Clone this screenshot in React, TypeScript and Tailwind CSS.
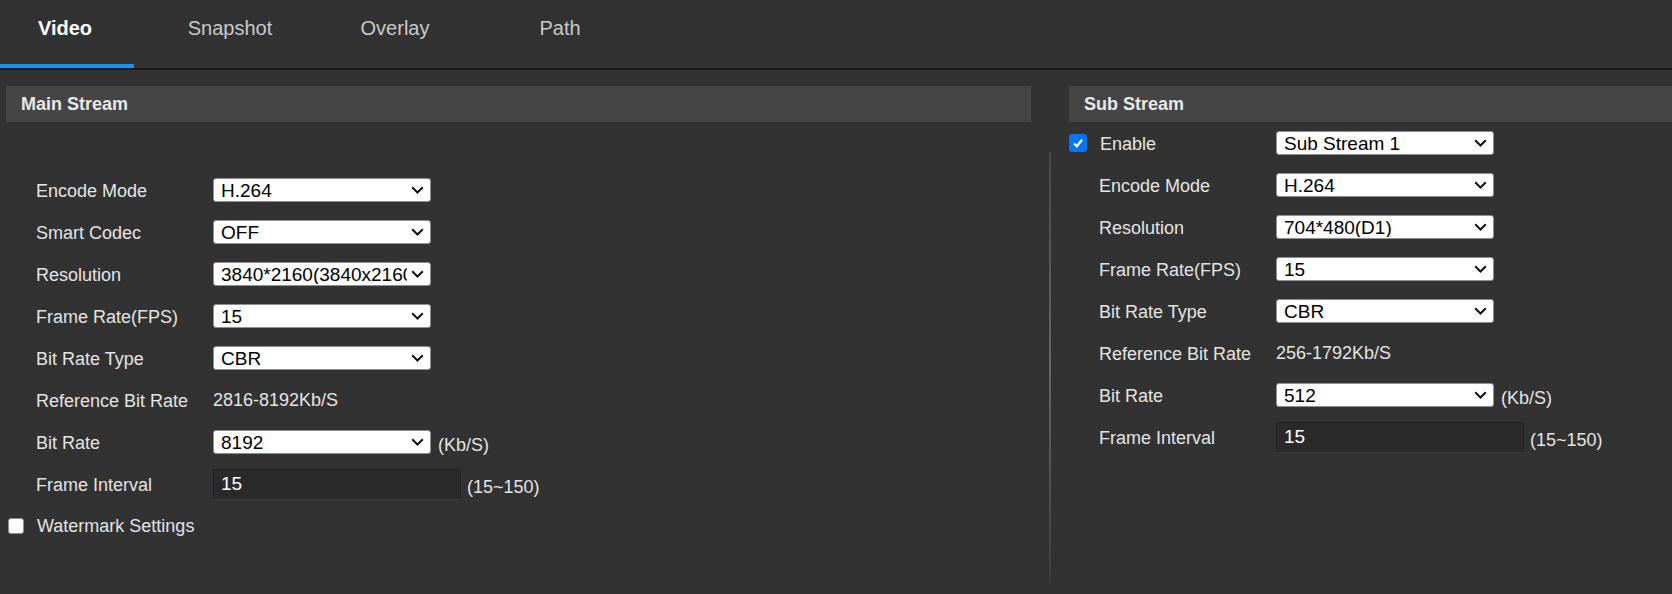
import { useState } from "react";

const FONT = { fontFamily: '"Liberation Sans", Arial, sans-serif' };

function Chevron() {
  return (
    <svg width="13" height="8" viewBox="0 0 13 8" className="shrink-0">
      <path d="M1.2 1.2 L6.5 6.5 L11.8 1.2" fill="none" stroke="#111" strokeWidth="2" />
    </svg>
  );
}

function Select({ value }: { value: string }) {
  return (
    <div className="w-[218px] h-[24px] rounded-[3px] bg-white border border-[#8f8f8f] flex items-center pl-[7px] pr-[6px] gap-1">
      <span className="flex-1 overflow-hidden whitespace-nowrap text-[19px] leading-none text-black">{value}</span>
      <Chevron />
    </div>
  );
}

function Row({ label, children }: { label: string; children: React.ReactNode }) {
  return (
    <div className="h-[42px] flex items-center">
      <div className="w-[207px] pl-[30px] pt-[2px] shrink-0 text-[18px] text-[#e4e4e4] whitespace-nowrap">{label}</div>
      {children}
    </div>
  );
}

function SelectRow({ label, value, unit }: { label: string; value: string; unit?: string }) {
  return (
    <Row label={label}>
      <Select value={value} />
      {unit && <span className="ml-[7px] mt-[6px] text-[18px] text-[#e4e4e4]">{unit}</span>}
    </Row>
  );
}

function IntervalRow() {
  const [v, setV] = useState("15");
  return (
    <Row label="Frame Interval">
      <input
        value={v}
        onChange={(e) => setV(e.target.value)}
        className="w-[248px] h-[31px] bg-[#2a2a2a] border border-[#232323] border-b-[#3a3a3a] px-[7px] text-[19px] text-white outline-none"
      />
      <span className="ml-[6px] mt-[6px] text-[18px] text-[#e4e4e4]">(15~150)</span>
    </Row>
  );
}

function Header({ title }: { title: string }) {
  return (
    <div className="h-[36px] bg-[#454545] flex items-center pl-[15px] text-[18px] font-bold text-[#e8e8e8]">
      {title}
    </div>
  );
}

const TABS = ["Video", "Snapshot", "Overlay", "Path"];

export default function App() {
  const [tab, setTab] = useState(0);
  const [enabled, setEnabled] = useState(true);
  const [watermark, setWatermark] = useState(false);

  return (
    <div style={FONT} className="w-[1672px] h-[594px] bg-[#323232] overflow-hidden">
      <div className="flex gap-[31px] h-[68px]">
        {TABS.map((t, i) => (
          <button
            key={t}
            onClick={() => setTab(i)}
            className="relative w-[134px] h-[68px] flex justify-center"
          >
            <span className={`h-[56px] pr-[4px] flex items-center text-[20px] ${i === tab ? "font-bold text-white" : "text-[#c9c9c9]"}`}>{t}</span>
            {i === tab && <span className="absolute left-0 right-0 bottom-0 h-[4px] bg-[#1e90e8]" />}
          </button>
        ))}
      </div>
      <div className="h-[2px] bg-[#1c1c1c]" />

      <div className="flex mt-[16px]">
        {/* main stream */}
        <div className="w-[1049px] shrink-0 pl-[6px] pr-[18px]">
          <Header title="Main Stream" />
          <div className="mt-[47px]">
            <SelectRow label="Encode Mode" value="H.264" />
            <SelectRow label="Smart Codec" value="OFF" />
            <SelectRow label="Resolution" value="3840*2160(3840x2160)" />
            <SelectRow label="Frame Rate(FPS)" value="15" />
            <SelectRow label="Bit Rate Type" value="CBR" />
            <Row label="Reference Bit Rate">
              <span className="text-[18px] text-[#e4e4e4]">2816-8192Kb/S</span>
            </Row>
            <SelectRow label="Bit Rate" value="8192" unit="(Kb/S)" />
            <IntervalRow />
            <div className="h-[42px] flex items-center ml-[2px]">
              <button
                onClick={() => setWatermark(!watermark)}
                className={`w-[16px] h-[16px] rounded-[3px] border ${watermark ? "bg-[#0075ff] border-[#0075ff]" : "bg-white border-[#8f8f8f]"}`}
              />
              <span className="ml-[13px] text-[18px] text-[#e4e4e4]">Watermark Settings</span>
            </div>
          </div>
        </div>

        {/* divider */}
        <div className="w-[2px] mt-[66px] h-[430px] shrink-0 bg-gradient-to-b from-[#484848] via-[#666666] to-[#3e3e3e]" />

        {/* sub stream */}
        <div className="flex-1 pl-[18px]">
          <Header title="Sub Stream" />
          <div className="h-[42px] flex items-center">
            <button
              onClick={() => setEnabled(!enabled)}
              className={`w-[18px] h-[18px] rounded-[3px] flex items-center justify-center ${enabled ? "bg-[#0075ff]" : "bg-white border border-[#8f8f8f]"}`}
            >
              {enabled && (
                <svg width="12" height="12" viewBox="0 0 12 12">
                  <path d="M2 6.5 L4.8 9.3 L10 2.8" fill="none" stroke="#fff" strokeWidth="2.2" />
                </svg>
              )}
            </button>
            <span className="ml-[13px] pt-[2px] w-[176px] text-[18px] text-[#e4e4e4]">Enable</span>
            <Select value="Sub Stream 1" />
          </div>
          <SelectRow label="Encode Mode" value="H.264" />
          <SelectRow label="Resolution" value="704*480(D1)" />
          <SelectRow label="Frame Rate(FPS)" value="15" />
          <SelectRow label="Bit Rate Type" value="CBR" />
          <Row label="Reference Bit Rate">
            <span className="text-[18px] text-[#e4e4e4]">256-1792Kb/S</span>
          </Row>
          <SelectRow label="Bit Rate" value="512" unit="(Kb/S)" />
          <IntervalRow />
        </div>
      </div>
    </div>
  );
}
